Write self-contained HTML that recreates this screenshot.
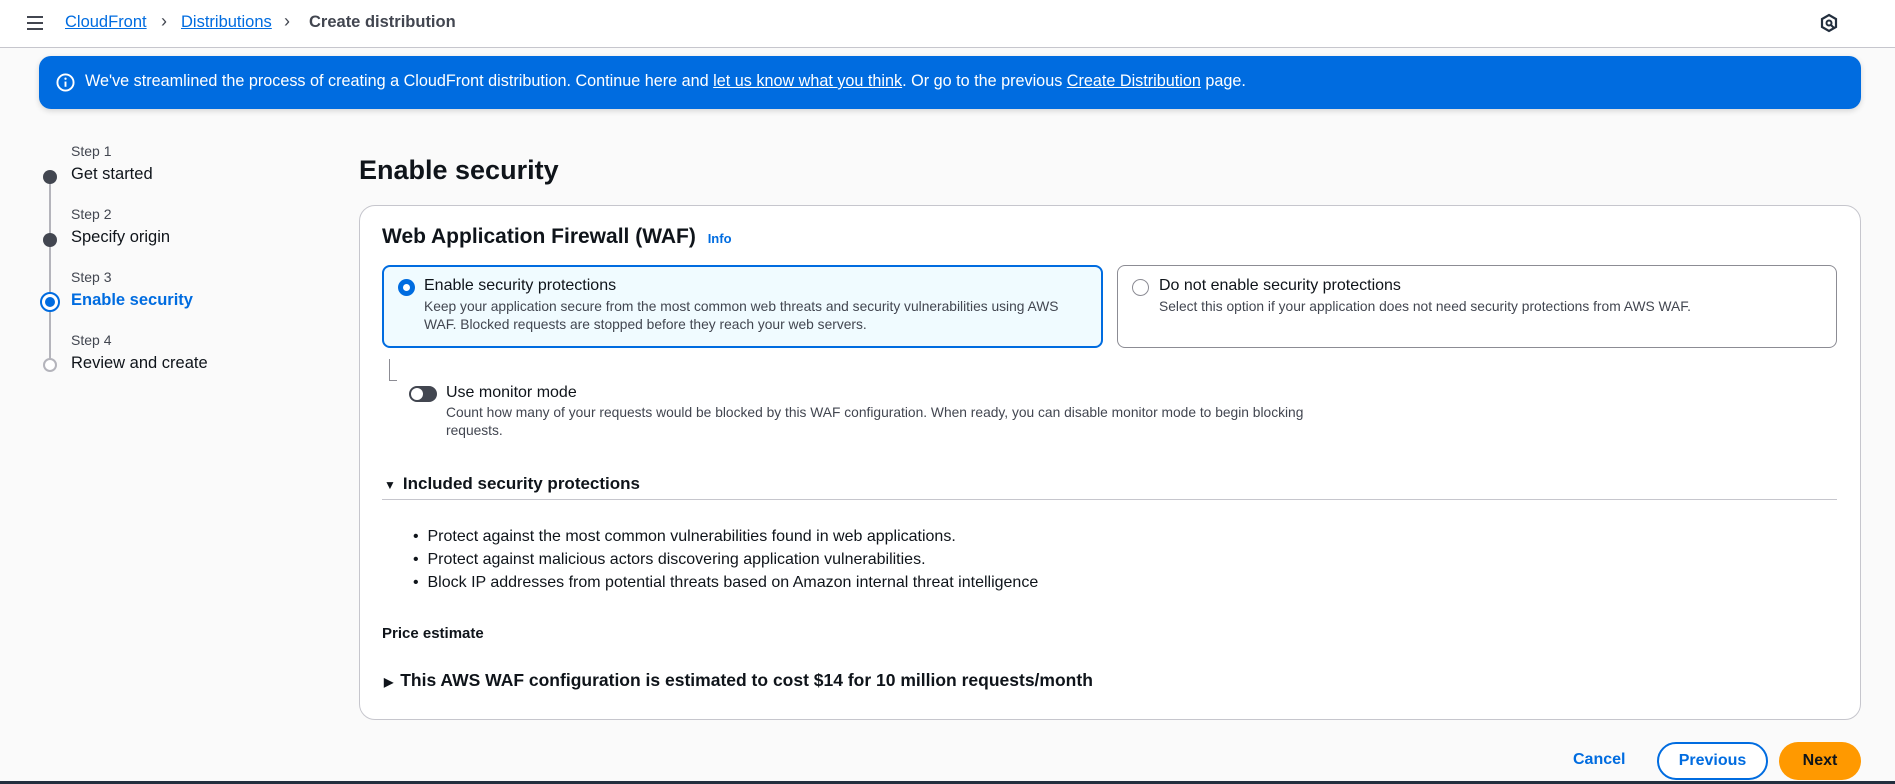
<!DOCTYPE html>
<html><head><meta charset="utf-8"><style>
*{box-sizing:border-box;margin:0;padding:0}
body{width:1895px;height:784px;overflow:hidden;background:#fafafa;font-family:"Liberation Sans",sans-serif;color:#0f141a;position:relative}
.abs{position:absolute;white-space:nowrap}
.nav{position:absolute;left:0;top:0;width:1895px;height:48px;background:#fff;border-bottom:1px solid #c6c6cd}
a{color:#006ce0;text-decoration:underline}
.banner{position:absolute;left:39px;top:56px;width:1822px;height:53px;background:#006ce0;border-radius:12px;box-shadow:0 2px 6px rgba(0,0,0,.15);color:#fff;font-size:16.2px}
.banner a{color:#fff}
.step{font-size:14px;color:#424650}
.lbl{font-size:16.5px;color:#0f141a}
.dot{position:absolute;width:14px;height:14px;border-radius:50%;background:#424650}
.card{position:absolute;left:359px;top:205px;width:1502px;height:515px;background:#fff;border:1px solid #c6c6cd;border-radius:16px}
.tile{position:absolute;border-radius:8px}
.desc{font-size:13.8px;color:#424650;line-height:18px}
.btn{position:absolute;top:742px;height:38px;border-radius:20px;font-size:16px;font-weight:bold;display:flex;align-items:center;justify-content:center}
</style></head><body>
<div class="nav"></div>
<div class="abs" style="left:27px;top:16px;width:16px">
<div style="height:2px;background:#424650;margin-bottom:4px"></div><div style="height:2px;background:#424650;margin-bottom:4px"></div><div style="height:2px;background:#424650"></div></div>
<div class="abs" style="left:65px;top:13px;font-size:16.5px"><a>CloudFront</a></div>
<div class="abs" style="left:161px;top:11px;font-size:18px;color:#424650">›</div>
<div class="abs" style="left:181px;top:13px;font-size:16.5px"><a>Distributions</a></div>
<div class="abs" style="left:284px;top:11px;font-size:18px;color:#424650">›</div>
<div class="abs" style="left:309px;top:13px;font-size:16.5px;font-weight:bold;color:#424650">Create distribution</div>
<svg class="abs" style="left:1820px;top:13px" width="18" height="20" viewBox="0 0 18 20"><path d="M9 2 L16 6 V14 L9 18 L2 14 V6 Z" fill="none" stroke="#232f3e" stroke-width="2.2"/><circle cx="9" cy="10" r="2.5" fill="none" stroke="#232f3e" stroke-width="2"/><path d="M11 12 L14 15" stroke="#232f3e" stroke-width="2"/></svg>

<div class="banner">
<svg class="abs" style="left:17px;top:17px" width="19" height="19" viewBox="0 0 20 20"><circle cx="10" cy="10" r="8.5" fill="none" stroke="#fff" stroke-width="2"/><path d="M10 9v5.5" stroke="#fff" stroke-width="2"/><circle cx="10" cy="6" r="1.2" fill="#fff"/></svg>
<div class="abs" style="left:46px;top:16px">We've streamlined the process of creating a CloudFront distribution. Continue here and <a>let us know what you think</a>. Or go to the previous <a>Create Distribution</a> page.</div>
</div>

<div class="abs" style="left:49px;top:176px;width:2px;height:188px;background:#b4b4bb"></div>
<div class="abs step" style="left:71px;top:143px">Step 1</div>
<div class="abs lbl" style="left:71px;top:165px">Get started</div>
<div class="dot" style="left:43px;top:170px"></div>
<div class="abs step" style="left:71px;top:206px">Step 2</div>
<div class="abs lbl" style="left:71px;top:228px">Specify origin</div>
<div class="dot" style="left:43px;top:233px"></div>
<div class="abs step" style="left:71px;top:269px">Step 3</div>
<div class="abs lbl" style="left:71px;top:291px;color:#006ce0;font-weight:bold">Enable security</div>
<div class="abs" style="left:40px;top:292px;width:20px;height:20px;border-radius:50%;border:2px solid #006ce0;background:#fff"><div style="margin:3px;width:10px;height:10px;border-radius:50%;background:#006ce0"></div></div>
<div class="abs step" style="left:71px;top:332px">Step 4</div>
<div class="abs lbl" style="left:71px;top:354px">Review and create</div>
<div class="abs" style="left:43px;top:358px;width:14px;height:14px;border-radius:50%;border:2px solid #b4b4bb;background:#fff"></div>

<div class="abs" style="left:359px;top:155px;font-size:27px;font-weight:bold">Enable security</div>

<div class="card"></div>
<div class="abs" style="left:382px;top:225px;font-size:21px;font-weight:bold">Web Application Firewall (WAF) <span style="font-size:13px;color:#006ce0;margin-left:6px">Info</span></div>
<div class="tile" style="left:382px;top:265px;width:721px;height:83px;border:2px solid #006ce0;background:#f0fbff"></div>
<div class="abs" style="left:398px;top:279px;width:17px;height:17px;border-radius:50%;background:#006ce0"><div style="margin:5px;width:7px;height:7px;border-radius:50%;background:#fff"></div></div>
<div class="abs" style="left:424px;top:277px;font-size:16px">Enable security protections</div>
<div class="abs desc" style="left:424px;top:298px">Keep your application secure from the most common web threats and security vulnerabilities using AWS<br>WAF. Blocked requests are stopped before they reach your web servers.</div>
<div class="tile" style="left:1117px;top:265px;width:720px;height:83px;border:1px solid #8c8c94;background:#fff"></div>
<div class="abs" style="left:1132px;top:279px;width:17px;height:17px;border-radius:50%;border:1.5px solid #8c8c94"></div>
<div class="abs" style="left:1159px;top:277px;font-size:16px">Do not enable security protections</div>
<div class="abs desc" style="left:1159px;top:298px">Select this option if your application does not need security protections from AWS WAF.</div>

<div class="abs" style="left:389px;top:359px;width:8px;height:22px;border-left:1px solid #8c8c94;border-bottom:1px solid #8c8c94"></div>
<div class="abs" style="left:409px;top:386px;width:28px;height:16px;border-radius:8px;background:#424650"><div style="margin:2px;width:12px;height:12px;border-radius:50%;background:#fff"></div></div>
<div class="abs" style="left:446px;top:384px;font-size:16px">Use monitor mode</div>
<div class="abs desc" style="left:446px;top:404px">Count how many of your requests would be blocked by this WAF configuration. When ready, you can disable monitor mode to begin blocking<br>requests.</div>

<div class="abs" style="left:384px;top:474px;font-size:17px;font-weight:bold"><span style="font-size:12px;margin-right:7px">▼</span>Included security protections</div>
<div class="abs" style="left:382px;top:499px;width:1455px;height:1px;background:#c6c6cd"></div>
<div class="abs" style="left:413px;top:525px;font-size:16px;line-height:23px">• &nbsp;Protect against the most common vulnerabilities found in web applications.<br>• &nbsp;Protect against malicious actors discovering application vulnerabilities.<br>• &nbsp;Block IP addresses from potential threats based on Amazon internal threat intelligence</div>
<div class="abs" style="left:382px;top:625px;font-size:15px;font-weight:bold">Price estimate</div>
<div class="abs" style="left:384px;top:670px;font-size:17.5px;font-weight:bold"><span style="font-size:12px;margin-right:7px">▶</span>This AWS WAF configuration is estimated to cost $14 for 10 million requests/month</div>

<div class="abs" style="left:1573px;top:751px;font-size:16px;font-weight:bold;color:#006ce0">Cancel</div>
<div class="btn" style="left:1657px;width:111px;border:2px solid #006ce0;color:#006ce0;background:#fff">Previous</div>
<div class="btn" style="left:1779px;width:82px;background:#ff9900;color:#0f141a">Next</div>
<div class="abs" style="left:0;top:781px;width:1895px;height:3px;background:#232f3e"></div>
</body></html>
